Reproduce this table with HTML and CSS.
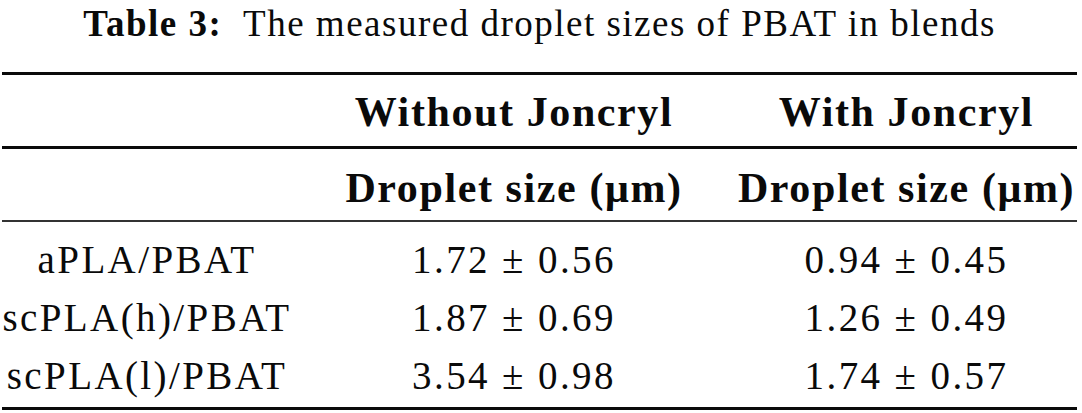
FILE: index.html
```html
<!DOCTYPE html>
<html lang="en">
<head>
  <meta charset="UTF-8" />
  <title>Table 3</title>
  <link rel="stylesheet" href="styles.css">
</head>
<body>
  <div class="sheet">
    <div class="caption"><b>Table 3:</b>&nbsp; The measured droplet sizes of PBAT in blends</div>

    <table class="results">
      <colgroup>
        <col class="col-name" />
        <col class="col-without" />
        <col class="col-with" />
      </colgroup>
      <thead>
        <tr class="head-top">
          <th></th>
          <th>Without Joncryl</th>
          <th>With Joncryl</th>
        </tr>
        <tr class="head-sub">
          <th></th>
          <th>Droplet size (μm)</th>
          <th>Droplet size (μm)</th>
        </tr>
      </thead>
      <tbody>
        <tr class="first">
          <td>aPLA/PBAT</td>
          <td>1.72 ± 0.56</td>
          <td>0.94 ± 0.45</td>
        </tr>
        <tr>
          <td>scPLA(h)/PBAT</td>
          <td>1.87 ± 0.69</td>
          <td>1.26 ± 0.49</td>
        </tr>
        <tr class="last">
          <td>scPLA(l)/PBAT</td>
          <td>3.54 ± 0.98</td>
          <td>1.74 ± 0.57</td>
        </tr>
      </tbody>
    </table>
  </div>
</body>
</html>
```

FILE: styles.css
```css
body {
  margin: 0;
  background: #ffffff;
  color: #0a0a0a;
  font-family: "Liberation Serif", "Times New Roman", serif;
}
.sheet {
  width: 1082px;
  padding: 0 5px 0 2px;
  box-sizing: border-box;
}
.caption {
  height: 72px;
  font-size: 37px;
  letter-spacing: 1.5px;
  text-align: center;
  line-height: 48px;
}
.results {
  width: 100%;
  border-collapse: collapse;
  table-layout: fixed;
  font-size: 39px;
  letter-spacing: 2.4px;
}
.col-name { width: 290px; }
.col-without { width: 444px; }
.results th,
.results td {
  padding: 0;
  text-align: center;
  font-weight: normal;
  white-space: nowrap;
  line-height: 44px;
}
.results th {
  font-weight: bold;
  font-size: 42px;
  letter-spacing: 1.6px;
}
.head-top th {
  border-top: 3px solid #0a0a0a;
  border-bottom: 3px solid #0a0a0a;
  height: 69px;
  padding-top: 2px;
}
.head-sub th {
  border-bottom: 2px solid #333;
  height: 64px;
  padding-top: 7px;
}
.results tbody td {
  height: 58px;
}
.results tbody tr.first td {
  padding-top: 9px;
}
.results tbody tr.last td {
  border-bottom: 3px solid #0a0a0a;
  padding-bottom: 2px;
}
```
